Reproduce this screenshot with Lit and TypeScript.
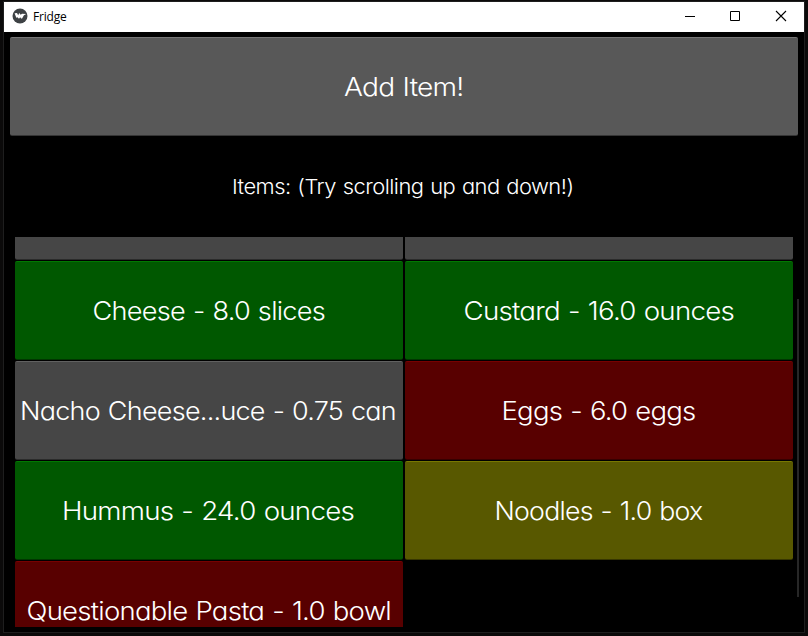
import { LitElement, html, css, svg } from "lit";
import { customElement } from "lit/decorators.js";

interface Item {
  label: string;
  tone: "gray" | "green" | "red" | "olive";
  // extent of the label, measured from the left edge of its cell
  from: number;
  to: number;
}

const ITEMS: Item[] = [
  { label: "", tone: "gray", from: 0, to: 0 },
  { label: "", tone: "gray", from: 0, to: 0 },
  { label: "Cheese - 8.0 slices", tone: "green", from: 77.5, to: 310 },
  { label: "Custard - 16.0 ounces", tone: "green", from: 58.5, to: 329 },
  { label: "Nacho Cheese...uce - 0.75 can", tone: "gray", from: 5, to: 381 },
  { label: "Eggs - 6.0 eggs", tone: "red", from: 96.5, to: 290.5 },
  { label: "Hummus - 24.0 ounces", tone: "green", from: 47, to: 339 },
  { label: "Noodles - 1.0 box", tone: "olive", from: 89.5, to: 297.5 },
  { label: "Questionable Pasta - 1.0 bowl", tone: "red", from: 11.5, to: 376 },
];

const label = (text: string, from: number, to: number, baseline: number) => html`
  <svg class="label" width="100%" height="100%">
    ${text
      ? svg`<text x=${from} y=${baseline} textLength=${to - from} lengthAdjust="spacingAndGlyphs">${text}</text>`
      : ""}
  </svg>
`;

@customElement("app-root")
export class AppRoot extends LitElement {
  static styles = css`
    :host {
      display: block;
      box-sizing: border-box;
      width: 808px;
      height: 636px;
      padding: 1px 3px 3px;
      overflow: hidden;
      background: #0b0a0a;
    }
    .window {
      box-sizing: border-box;
      width: 802px;
      height: 632px;
      border: 1px solid #1e1e1e;
      display: flex;
      flex-direction: column;
      background: #000;
    }
    .titlebar {
      height: 30px;
      flex: none;
      display: flex;
      align-items: center;
      background: #fff;
      color: #000;
      font: 12px "Open Sans", sans-serif;
    }
    .logo {
      margin: 0 5px 2px 8px;
      display: block;
    }
    .title {
      flex: 1;
      letter-spacing: -0.2px;
      line-height: 16px;
      padding-bottom: 1px;
    }
    .controls {
      display: flex;
    }
    .control {
      width: 46px;
      height: 30px;
      display: block;
    }
    .body {
      flex: 1;
      min-height: 0;
      display: flex;
      flex-direction: column;
      padding: 5px 5px 5px 6px;
    }
    .label {
      display: block;
      overflow: visible;
      fill: #fff;
      font-family: Inter, sans-serif;
      font-weight: 300;
      font-size: 25.5px;
      font-feature-settings: "cv11";
      letter-spacing: -0.7px;
      word-spacing: 1px;
      white-space: pre;
    }
    .add,
    .cell {
      box-sizing: border-box;
      height: 99px;
      border: 0 solid;
      border-width: 1px 0;
      border-radius: 2px;
    }
    .add {
      flex: none;
      width: 788px;
      background: #585858;
      border-color: #777 transparent #353535;
    }
    .heading {
      flex: none;
      height: 101px;
      width: 788px;
    }
    .heading .label {
      font-size: 20.5px;
      letter-spacing: -0.5px;
    }
    .scroller {
      flex: none;
      height: 390px;
      width: 789px;
      display: flex;
      justify-content: space-between;
      overflow: hidden;
    }
    .grid {
      display: grid;
      grid-template-columns: 388px 388px;
      grid-auto-rows: 99px;
      gap: 1px 2px;
      margin: -76px 0 0 5px;
      align-content: start;
    }
    .gray {
      background: #464646;
      border-color: #616161 transparent #2b2b2b;
    }
    .green {
      background: #005800;
      border-color: #007800 transparent #003600;
    }
    .red {
      background: #580000;
      border-color: #780000 transparent #360000;
    }
    .olive {
      background: #585800;
      border-color: #787800 transparent #363600;
    }
    .bar {
      width: 2px;
      height: 298px;
      margin-top: 62px;
      background: #272727;
    }
  `;

  render() {
    return html`
      <div class="window">
        <div class="titlebar">
          <svg class="logo" width="16" height="16" viewBox="0 0 16 16">
            <circle cx="8" cy="8" r="7.5" fill="#3e4245" />
            <path d="M2.6 5.2 5 5l1.2 2.2L7.2 5l1.5 1.7L10 5.7l4.2.2-2.3 1.3-1.8 3.2-1 .2-.9-1.4-1.2 1.6-1.5-1.6-1.2.6z" fill="#fff" />
          </svg>
          <span class="title">Fridge</span>
          <div class="controls">
            <svg class="control" viewBox="0 0 46 30">
              <path d="M19 14.5h10" stroke="#000" />
            </svg>
            <svg class="control" viewBox="0 0 46 30">
              <path d="M18.5 9.5h9v9h-9z" fill="none" stroke="#000" />
            </svg>
            <svg class="control" viewBox="0 0 46 30">
              <path d="m18 9 10 10m0-10-10 10" stroke="#000" stroke-width="1.1" />
            </svg>
          </div>
        </div>
        <div class="body">
          <div class="add">${label("Add Item!", 334, 453.5, 58)}</div>
          <div class="heading">${label("Items: (Try scrolling up and down!)", 222, 563.5, 58)}</div>
          <div class="scroller">
            <div class="grid">
              ${ITEMS.map(
                (item) => html`<div class="cell ${item.tone}">${label(item.label, item.from, item.to, 58)}</div>`
              )}
            </div>
            <div class="bar"></div>
          </div>
        </div>
      </div>
    `;
  }
}
